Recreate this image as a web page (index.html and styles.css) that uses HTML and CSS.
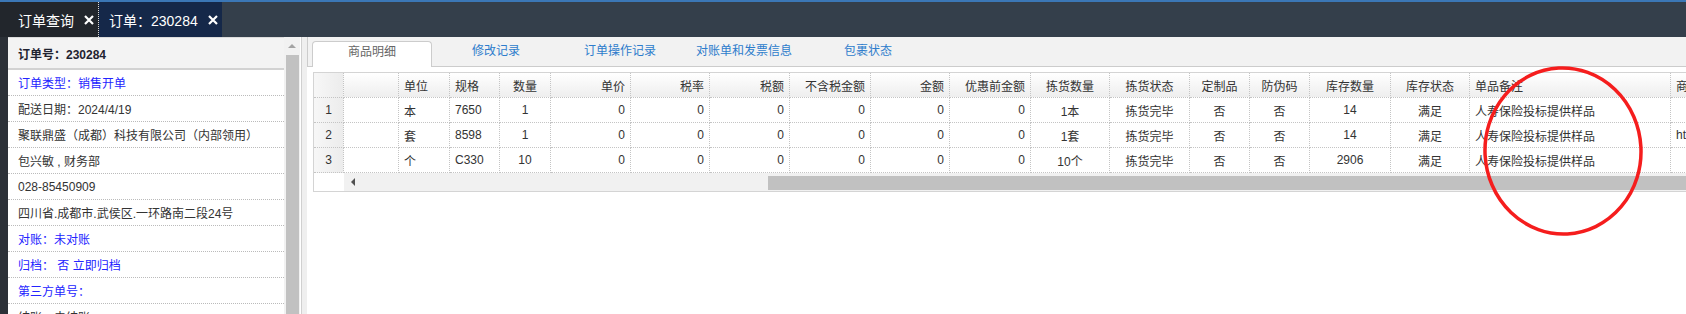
FILE: index.html
```html
<!DOCTYPE html>
<html lang="zh-CN">
<head>
  <meta charset="UTF-8" />
  <title>订单：230284</title>
  <link rel="stylesheet" href="styles.css">
</head>
<body>

  <div class="topline"></div>

  <!-- page tabs -->
  <div class="tabbar">
    <div class="page-tab tab-list">
      订单查询
      <svg class="close" viewBox="0 0 10 10"><path d="M1 1L9 9M9 1L1 9" /></svg>
    </div>
    <div class="page-tab tab-cur">
      订单：230284
      <svg class="close" viewBox="0 0 10 10"><path d="M1 1L9 9M9 1L1 9" /></svg>
    </div>
  </div>

  <div class="main">
    <div class="rail"></div>

    <!-- order summary -->
    <div class="info">
      <div class="info-head">订单号：230284</div>
      <div class="info-row link">订单类型：销售开单</div>
      <div class="info-row">配送日期：2024/4/19</div>
      <div class="info-row">聚联鼎盛（成都）科技有限公司（内部领用）</div>
      <div class="info-row">包兴敏 , 财务部</div>
      <div class="info-row">028-85450909</div>
      <div class="info-row">四川省.成都市.武侯区.一环路南二段24号</div>
      <div class="info-row link">对账：未对账</div>
      <div class="info-row link">归档：&nbsp;否 立即归档</div>
      <div class="info-row link">第三方单号：</div>
      <div class="info-row">结账：未结账</div>
    </div>
    <div class="vscroll">
      <div class="vs-up"><span class="tri-up"></span></div>
      <div class="vs-thumb"></div>
    </div>
    <div class="splitter"></div>

    <!-- detail tabs -->
    <div class="detail">
      <div class="subtabs">
        <div class="subtab active">商品明细</div>
        <div class="subtab">修改记录</div>
        <div class="subtab">订单操作记录</div>
        <div class="subtab">对账单和发票信息</div>
        <div class="subtab">包裹状态</div>
      </div>

      <div class="grid">
        <table class="items">
          <colgroup>
            <col style="width:30px"><col style="width:55px"><col style="width:51px"><col style="width:50px">
            <col style="width:51px"><col style="width:80px"><col style="width:79px"><col style="width:80px">
            <col style="width:81px"><col style="width:79px"><col style="width:81px"><col style="width:79px">
            <col style="width:80px"><col style="width:60px"><col style="width:60px"><col style="width:81px">
            <col style="width:79px"><col style="width:201px"><col style="width:120px">
          </colgroup>
          <thead>
            <tr>
              <th class="num"></th><th></th>
              <th class="l">单位</th><th class="l">规格</th><th class="c">数量</th>
              <th class="r">单价</th><th class="r">税率</th><th class="r">税额</th>
              <th class="r">不含税金额</th><th class="r">金额</th><th class="r">优惠前金额</th>
              <th class="c">拣货数量</th><th class="c">拣货状态</th><th class="c">定制品</th>
              <th class="c">防伪码</th><th class="c">库存数量</th><th class="c">库存状态</th>
              <th class="l">单品备注</th><th class="l">商品链接</th>
            </tr>
          </thead>
          <tbody>
            <tr>
              <td class="num">1</td><td></td>
              <td class="l">本</td><td class="l">7650</td><td class="c">1</td>
              <td class="r">0</td><td class="r">0</td><td class="r">0</td>
              <td class="r">0</td><td class="r">0</td><td class="r">0</td>
              <td class="c">1本</td><td class="c">拣货完毕</td><td class="c">否</td>
              <td class="c">否</td><td class="c">14</td><td class="c">满足</td>
              <td class="l">人寿保险投标提供样品</td><td class="l"></td>
            </tr>
            <tr>
              <td class="num">2</td><td></td>
              <td class="l">套</td><td class="l">8598</td><td class="c">1</td>
              <td class="r">0</td><td class="r">0</td><td class="r">0</td>
              <td class="r">0</td><td class="r">0</td><td class="r">0</td>
              <td class="c">1套</td><td class="c">拣货完毕</td><td class="c">否</td>
              <td class="c">否</td><td class="c">14</td><td class="c">满足</td>
              <td class="l">人寿保险投标提供样品</td><td class="l">http://item.jd.com/</td>
            </tr>
            <tr>
              <td class="num">3</td><td></td>
              <td class="l">个</td><td class="l">C330</td><td class="c">10</td>
              <td class="r">0</td><td class="r">0</td><td class="r">0</td>
              <td class="r">0</td><td class="r">0</td><td class="r">0</td>
              <td class="c">10个</td><td class="c">拣货完毕</td><td class="c">否</td>
              <td class="c">否</td><td class="c">2906</td><td class="c">满足</td>
              <td class="l">人寿保险投标提供样品</td><td class="l"></td>
            </tr>
          </tbody>
        </table>
        <div class="hscroll">
          <div class="hs-corner"></div>
          <div class="hs-track">
            <div class="hs-left"><span class="tri-left"></span></div>
            <div class="hs-thumb"></div>
          </div>
        </div>
      </div>
    </div>
  </div>

  <!-- hand-drawn red mark over the remark column -->
  <svg class="mark" viewBox="0 0 170 180">
    <ellipse cx="85" cy="88" rx="78" ry="83" transform="rotate(-3 85 88)" />
  </svg>

</body>
</html>
```

FILE: styles.css
```css
:root {
  --bar: #343f4b;
  --line: #cccccc;
  --dots: #c4c4c4;
  --blue-link: #2424ff;
  --tab-blue: #2d7ccc;
  --text: #333;
}
* {
  box-sizing: border-box;
}
body {
  margin: 0;
  width: 1686px;
  height: 314px;
  overflow: hidden;
  position: relative;
  background: #fff;
  color: var(--text);
  font-family: "Liberation Sans", "Noto Sans CJK SC", sans-serif;
  font-size: 12px;
}
.topline {
  height: 2px;
  background: #3b77b6;
}
.tabbar {
  height: 35px;
  background: var(--bar);
  display: flex;
}
.page-tab {
  display: flex;
  align-items: center;
  color: #fff;
  font-size: 14px;
  white-space: nowrap;
}
.page-tab .close {
  width: 10px;
  height: 10px;
  margin-left: 10px;
  margin-top: 1px;
}
.page-tab .close path {
  stroke: #fff;
  stroke-width: 2.2;
  fill: none;
}
.tab-list {
  width: 99px;
  padding-left: 18px;
  background: #22262c;
  border-right: 1px dotted #d8d8d8;
}
.tab-cur {
  width: 123px;
  padding-left: 10px;
  background: #152849;
}
.main {
  display: flex;
  height: 277px;
}
.rail {
  width: 8px;
  background: #2b3037;
}
.info {
  width: 276px;
  overflow: hidden;
}
.info-head {
  height: 33px;
  border-top: 1px solid #dcdcdc;
  border-bottom: 2px solid #d2d2d2;
  background: #f3f3f3;
  padding-left: 10px;
  display: flex;
  align-items: center;
  font-weight: bold;
  color: #1f2330;
}
.info-row {
  height: 26px;
  border-bottom: 1px dotted #bbb;
  padding-left: 10px;
  display: flex;
  align-items: center;
  white-space: nowrap;
}
.info-row.link {
  color: var(--blue-link);
}
.vscroll {
  width: 16px;
  background: #f1f1f1;
  display: flex;
  flex-direction: column;
}
.vs-up {
  height: 18px;
  display: flex;
  justify-content: center;
  align-items: center;
}
.tri-up {
  width: 0;
  height: 0;
  border-left: 4px solid transparent;
  border-right: 4px solid transparent;
  border-bottom: 4px solid #a3a3a3;
}
.vs-thumb {
  flex: 1;
  margin: 0 1px 0 2px;
  background: #c1c1c1;
}
.splitter {
  width: 7px;
  border-left: 1px solid #fff;
  background: #efefef;
  box-shadow: inset 1px 0 0 #d0d0d0;
}
.detail {
  flex: 1;
  min-width: 0;
  overflow: hidden;
}
.subtabs {
  height: 30px;
  background: #f2f2f2;
  border-left: 1px solid var(--line);
  border-bottom: 1px solid var(--line);
  display: flex;
  align-items: flex-end;
  gap: 4px;
  padding-left: 4px;
}
.subtab {
  width: 120px;
  height: 25px;
  flex: none;
  text-align: center;
  line-height: 20px;
  color: var(--tab-blue);
}
.subtab.active {
  height: 26px;
  margin-bottom: -1px;
  background: #fff;
  border: 1px solid var(--line);
  border-bottom: none;
  border-radius: 4px 4px 0 0;
  color: #666;
}
.grid {
  width: 1479px;
  margin: 5px 0 0 6px;
  border: 1px solid #d4d4d4;
}
.items {
  table-layout: fixed;
  border-collapse: separate;
  border-spacing: 0;
  width: 1477px;
}
.items th,
.items td {
  height: 25px;
  padding: 0 5px;
  border-right: 1px dotted var(--dots);
  border-bottom: 1px dotted var(--dots);
  white-space: nowrap;
  overflow: hidden;
  font-weight: normal;
}
.items th {
  background: linear-gradient(#ffffff, #eeeeee);
}
.items .num {
  text-align: center;
  background: linear-gradient(90deg, #f7f7f7, #ececec);
}
.items .l { text-align: left; }
.items .c { text-align: center; }
.items .r { text-align: right; }
.hscroll {
  display: flex;
  height: 18px;
}
.hs-corner {
  width: 30px;
  flex: none;
}
.hs-track {
  flex: 1;
  display: flex;
  background: #f1f1f1;
}
.hs-left {
  width: 17px;
  display: flex;
  align-items: center;
  justify-content: center;
}
.tri-left {
  width: 0;
  height: 0;
  border-top: 4px solid transparent;
  border-bottom: 4px solid transparent;
  border-right: 4px solid #505050;
}
.hs-thumb {
  flex: 1;
  margin: 3px 0 1px 407px;
  background: #c1c1c1;
}
.mark {
  position: absolute;
  left: 1478px;
  top: 63px;
  width: 170px;
  height: 180px;
  overflow: visible;
}
.mark ellipse {
  fill: none;
  stroke: #f51d1d;
  stroke-width: 3.5;
}
```
